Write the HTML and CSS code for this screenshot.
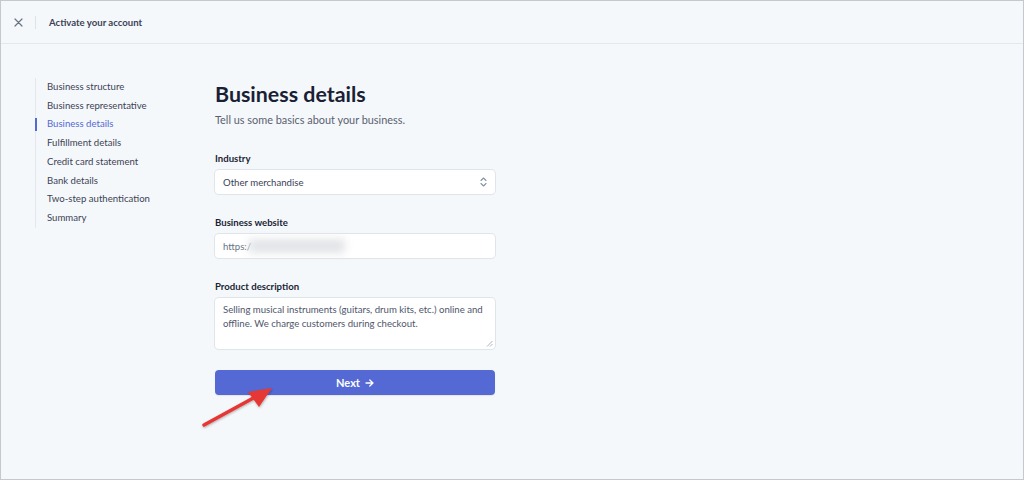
FILE: index.html
```html
<!DOCTYPE html>
<html lang="en">
<head>
<meta charset="utf-8">
<title>Activate your account</title>
<link rel="stylesheet" href="styles.css">
</head>
<body>
<div class="frame">
  <header class="topbar">
    <button class="close" aria-label="Close">
      <svg width="9" height="9" viewBox="0 0 9 9"><path d="M1 1L8 8M8 1L1 8" stroke="#697386" stroke-width="1.2" stroke-linecap="round"/></svg>
    </button>
    <span class="divider"></span>
    <span class="title">Activate your account</span>
  </header>
  <div class="content">
    <nav class="steps">
      <ul>
        <li>Business structure</li>
        <li>Business representative</li>
        <li class="active">Business details</li>
        <li>Fulfillment details</li>
        <li>Credit card statement</li>
        <li>Bank details</li>
        <li>Two-step authentication</li>
        <li>Summary</li>
      </ul>
    </nav>
    <main class="form">
      <h1>Business details</h1>
      <p class="sub">Tell us some basics about your business.</p>
      <div class="field f1">
        <label>Industry</label>
        <div class="control select">
          <span>Other merchandise</span>
          <svg class="chev" width="7" height="10" viewBox="0 0 7 10"><path d="M1 3.5L3.5 1L6 3.5M1 6.5L3.5 9L6 6.5" fill="none" stroke="#8792a2" stroke-width="1.1" stroke-linecap="round" stroke-linejoin="round"/></svg>
        </div>
      </div>
      <div class="field">
        <label>Business website</label>
        <div class="control input">
          <span>https:/</span><span class="blur"></span>
        </div>
      </div>
      <div class="field">
        <label>Product description</label>
        <div class="control textarea">
          <p>Selling musical instruments (guitars, drum kits, etc.) online and offline. We charge customers during checkout.</p>
          <svg class="grip" width="7" height="7" viewBox="0 0 7 7"><path d="M6.5 1L1 6.5M6.5 4L4 6.5" stroke="#a3acb9" stroke-width="0.9"/></svg>
        </div>
      </div>
      <button class="next">Next <svg class="arr" width="9" height="8" viewBox="0 0 9 8"><path d="M1 4H8M4.8 1L8 4L4.8 7" fill="none" stroke="#fff" stroke-width="1.3" stroke-linecap="round" stroke-linejoin="round"/></svg></button>
    </main>
  </div>
  <svg class="pointer" width="90" height="50" viewBox="0 0 90 50">
    <defs>
      <filter id="sh" x="-20%" y="-20%" width="140%" height="140%"><feDropShadow dx="0.5" dy="1" stdDeviation="0.8" flood-color="#000" flood-opacity="0.3"/></filter>
    </defs>
    <g filter="url(#sh)">
      <path d="M7 43L60 14" stroke="#e53935" stroke-width="3.6" stroke-linecap="round"/>
      <path d="M75 6L51 10L62 25Z" fill="#e53935"/>
    </g>
  </svg>
</div>
</body>
</html>
```

FILE: styles.css
```css
* { box-sizing: border-box; }
html, body { margin: 0; padding: 0; }
body {
  width: 1024px;
  height: 480px;
  overflow: hidden;
  font-family: Lato, "Open Sans", sans-serif;
  color: #3c4257;
}
.frame {
  position: relative;
  width: 1024px;
  height: 480px;
  background: #f5f8fa;
  border: 1px solid #c5c9ce;
}
.topbar {
  height: 43px;
  border-bottom: 1px solid #e3e8ee;
  display: flex;
  align-items: center;
}
.close {
  border: 0;
  background: none;
  padding: 0;
  margin-left: 13px;
  width: 9px;
  height: 9px;
  display: flex;
}
.divider {
  width: 1px;
  height: 13px;
  background: #dfe3e8;
  margin-left: 12px;
}
.title {
  margin-left: 13px;
  font-size: 9.6px;
  font-weight: 700;
  color: #3c4257;
}
.content {
  display: flex;
}
.steps {
  width: 214px;
  flex: none;
  padding-left: 34px;
  padding-top: 34px;
}
.steps ul {
  list-style: none;
  margin: 0;
  padding: 0;
  border-left: 1px solid #e3e8ee;
}
.steps li {
  font-size: 9.6px;
  line-height: 18.7px;
  padding-left: 11px;
  color: #3c4257;
  position: relative;
}
.steps li.active {
  color: #5469d4;
}
.steps li.active::before {
  content: "";
  position: absolute;
  left: -1px;
  top: 3px;
  bottom: 3px;
  width: 2px;
  background: #5469d4;
}
.form {
  width: 280px;
  padding-top: 36px;
}
h1 {
  margin: 0;
  font-size: 21.4px;
  line-height: 28px;
  font-weight: 700;
  color: #1a1f36;
}
.sub {
  margin: 4px 0 0;
  font-size: 10.9px;
  line-height: 16px;
  color: #596171;
}
.field {
  margin-top: 22px;
}
.field.f1 { margin-top: 24px; }
.field label {
  display: block;
  font-size: 9.6px;
  line-height: 14px;
  font-weight: 700;
  color: #1a1f36;
  margin-bottom: 4px;
}
.control {
  background: #fff;
  border-radius: 4px;
  box-shadow: 0 0 0 1px #e0e5eb, 0 1px 1px rgba(0,0,0,0.05);
  font-size: 9.6px;
  color: #3c4257;
}
.select, .input {
  height: 24px;
  display: flex;
  align-items: center;
  padding: 0 8px;
}
.select span { flex: 1; }
.input span { color: #697386; }
.blur {
  width: 96px;
  height: 14px;
  margin-left: -2px;
  background: #e2e4e7;
  filter: blur(4px);
}
.textarea {
  position: relative;
  height: 51px;
  padding: 5px 8px;
}
.textarea p {
  margin: 0;
  line-height: 14px;
  color: #4f566b;
}
.grip {
  position: absolute;
  right: 2px;
  bottom: 2px;
}
.next {
  display: flex;
  align-items: center;
  justify-content: center;
  gap: 5px;
  width: 280px;
  height: 25px;
  margin-top: 21px;
  border: 0;
  border-radius: 4px;
  background: #5469d4;
  color: #fff;
  font-family: inherit;
  font-size: 11px;
  font-weight: 700;
  box-shadow: 0 1px 1px rgba(0,0,0,0.08);
}
.pointer {
  position: absolute;
  left: 196px;
  top: 381px;
}
```
